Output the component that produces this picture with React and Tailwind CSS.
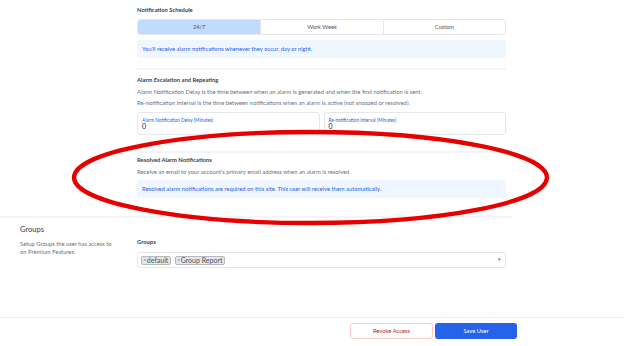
import React from 'react';

// Annotation ellipse drawn over the screenshot
function RedEllipse() {
  return (
    <svg className="absolute left-0 top-0 pointer-events-none" width="631" height="346">
      <ellipse cx="310.5" cy="177.5" rx="236.5" ry="45.5" fill="none" stroke="#e60000" strokeWidth="4.3" />
    </svg>
  );
}

function InfoBox({ children }) {
  return (
    <div className="h-[18px] rounded-[3px] bg-[#eff6ff] flex items-center px-[5px] text-[5.8px] text-[#2563eb]">
      {children}
    </div>
  );
}

function Title({ children, className = '' }) {
  return <div className={`leading-[10px] text-[5.8px] font-bold text-[#374151] ${className}`}>{children}</div>;
}

function Desc({ children, className = '' }) {
  return <div className={`leading-[10px] text-[5.85px] text-[#6b7280] ${className}`}>{children}</div>;
}

function NumberField({ label }) {
  return (
    <div className="flex-1 h-[23px] border border-[#e5e7eb] rounded-[3px] px-[4px] pt-[5px]">
      <div className="leading-[5px] text-[4.7px] text-[#2563eb]">{label}</div>
      <div className="leading-[7px] text-[7px] text-[#111827]">0</div>
    </div>
  );
}

function Tag({ children }) {
  return (
    <span className="h-[9px] flex items-center px-[1.5px] bg-[#e5e7eb] border border-[#b6b9be] rounded-[2px] text-[7px] leading-none text-[#4b5563]">
      <span className="text-[4.8px] mr-[0.5px] text-[#6b7280]">×</span>{children}
    </span>
  );
}

export default function App() {
  return (
    <div className="relative w-[631px] h-[346px] bg-white overflow-hidden flex flex-col font-['Lato','Liberation_Sans',sans-serif]">
      <div className="flex-1 w-[512px]">
        <div className="pl-[137px] pr-[6px]">
          {/* Notification schedule */}
          <Title className="pt-[5px]">Notification Schedule</Title>
          <div className="mt-[4px] h-[16px] grid grid-cols-3 border border-[#e5e7eb] rounded-[3px] overflow-hidden text-[5.7px] text-[#4b5563]">
            <div className="bg-[#bfdbfe] flex items-center justify-center">24/7</div>
            <div className="border-l border-[#e5e7eb] flex items-center justify-center">Work Week</div>
            <div className="border-l border-[#e5e7eb] flex items-center justify-center">Custom</div>
          </div>
          <div className="mt-[5px]">
            <InfoBox>You'll receive alarm notifications whenever they occur, day or night.</InfoBox>
          </div>
          <div className="mt-[10px] h-[2px] bg-[#f3f4f6]" />

          {/* Escalation */}
          <Title className="mt-[5px]">Alarm Escalation and Repeating</Title>
          <Desc className="mt-[2px]">Alarm Notification Delay is the time between when an alarm is generated and when the first notification is sent.</Desc>
          <Desc className="mt-[1px]">Re-notification Interval is the time between notifications when an alarm is active (not snoozed or resolved).</Desc>
          <div className="mt-[4px] flex gap-[4px]">
            <NumberField label="Alarm Notification Delay (Minutes)" />
            <NumberField label="Re-notification Interval (Minutes)" />
          </div>
          <div className="mt-[16px] h-[2px] bg-[#f3f4f6]" />

          {/* Resolved */}
          <Title className="mt-[2px]">Resolved Alarm Notifications</Title>
          <Desc className="mt-[2px]">Receive an email to your account's primary email address when an alarm is resolved.</Desc>
          <div className="mt-[3px]">
            <InfoBox>Resolved alarm notifications are required on this site. This user will receive them automatically.</InfoBox>
          </div>
        </div>
        <div className="mt-[18px] h-[2px] bg-[#f3f4f6]" />

        {/* Groups */}
        <div className="flex">
          <div className="w-[137px] pl-[20px]">
            <div className="mt-[7px] leading-[10px] text-[7.5px] text-[#374151]">Groups</div>
            <div className="mt-[5px] leading-[8px] text-[5.8px] text-[#6b7280]">
              Setup Groups the user has access to<br />on Premium Features.
            </div>
          </div>
          <div className="w-[369px]">
            <div className="mt-[19px] leading-[10px] text-[5.8px] font-bold text-[#374151]">Groups</div>
            <div className="mt-[5px] h-[16px] border border-[#e5e7eb] rounded-[3px] flex items-center gap-[4px] pl-[3px] pr-[4px]">
              <Tag>default</Tag>
              <Tag>Group Report</Tag>
              <span className="ml-auto text-[5px] text-[#6b7280]">▾</span>
            </div>
          </div>
        </div>
      </div>

      {/* Footer */}
      <div className="w-[623px] h-[29px] border-t border-[#eceef1] flex justify-end gap-[2px] pr-[106px] pt-[5px]">
        <button className="w-[83px] h-[16px] border border-[#fecaca] rounded-[3px] bg-white text-[5.8px] text-[#b91c1c]">Revoke Access</button>
        <button className="w-[82px] h-[16px] rounded-[3px] bg-[#2563eb] text-[5.8px] text-white">Save User</button>
      </div>

      <RedEllipse />
    </div>
  );
}
